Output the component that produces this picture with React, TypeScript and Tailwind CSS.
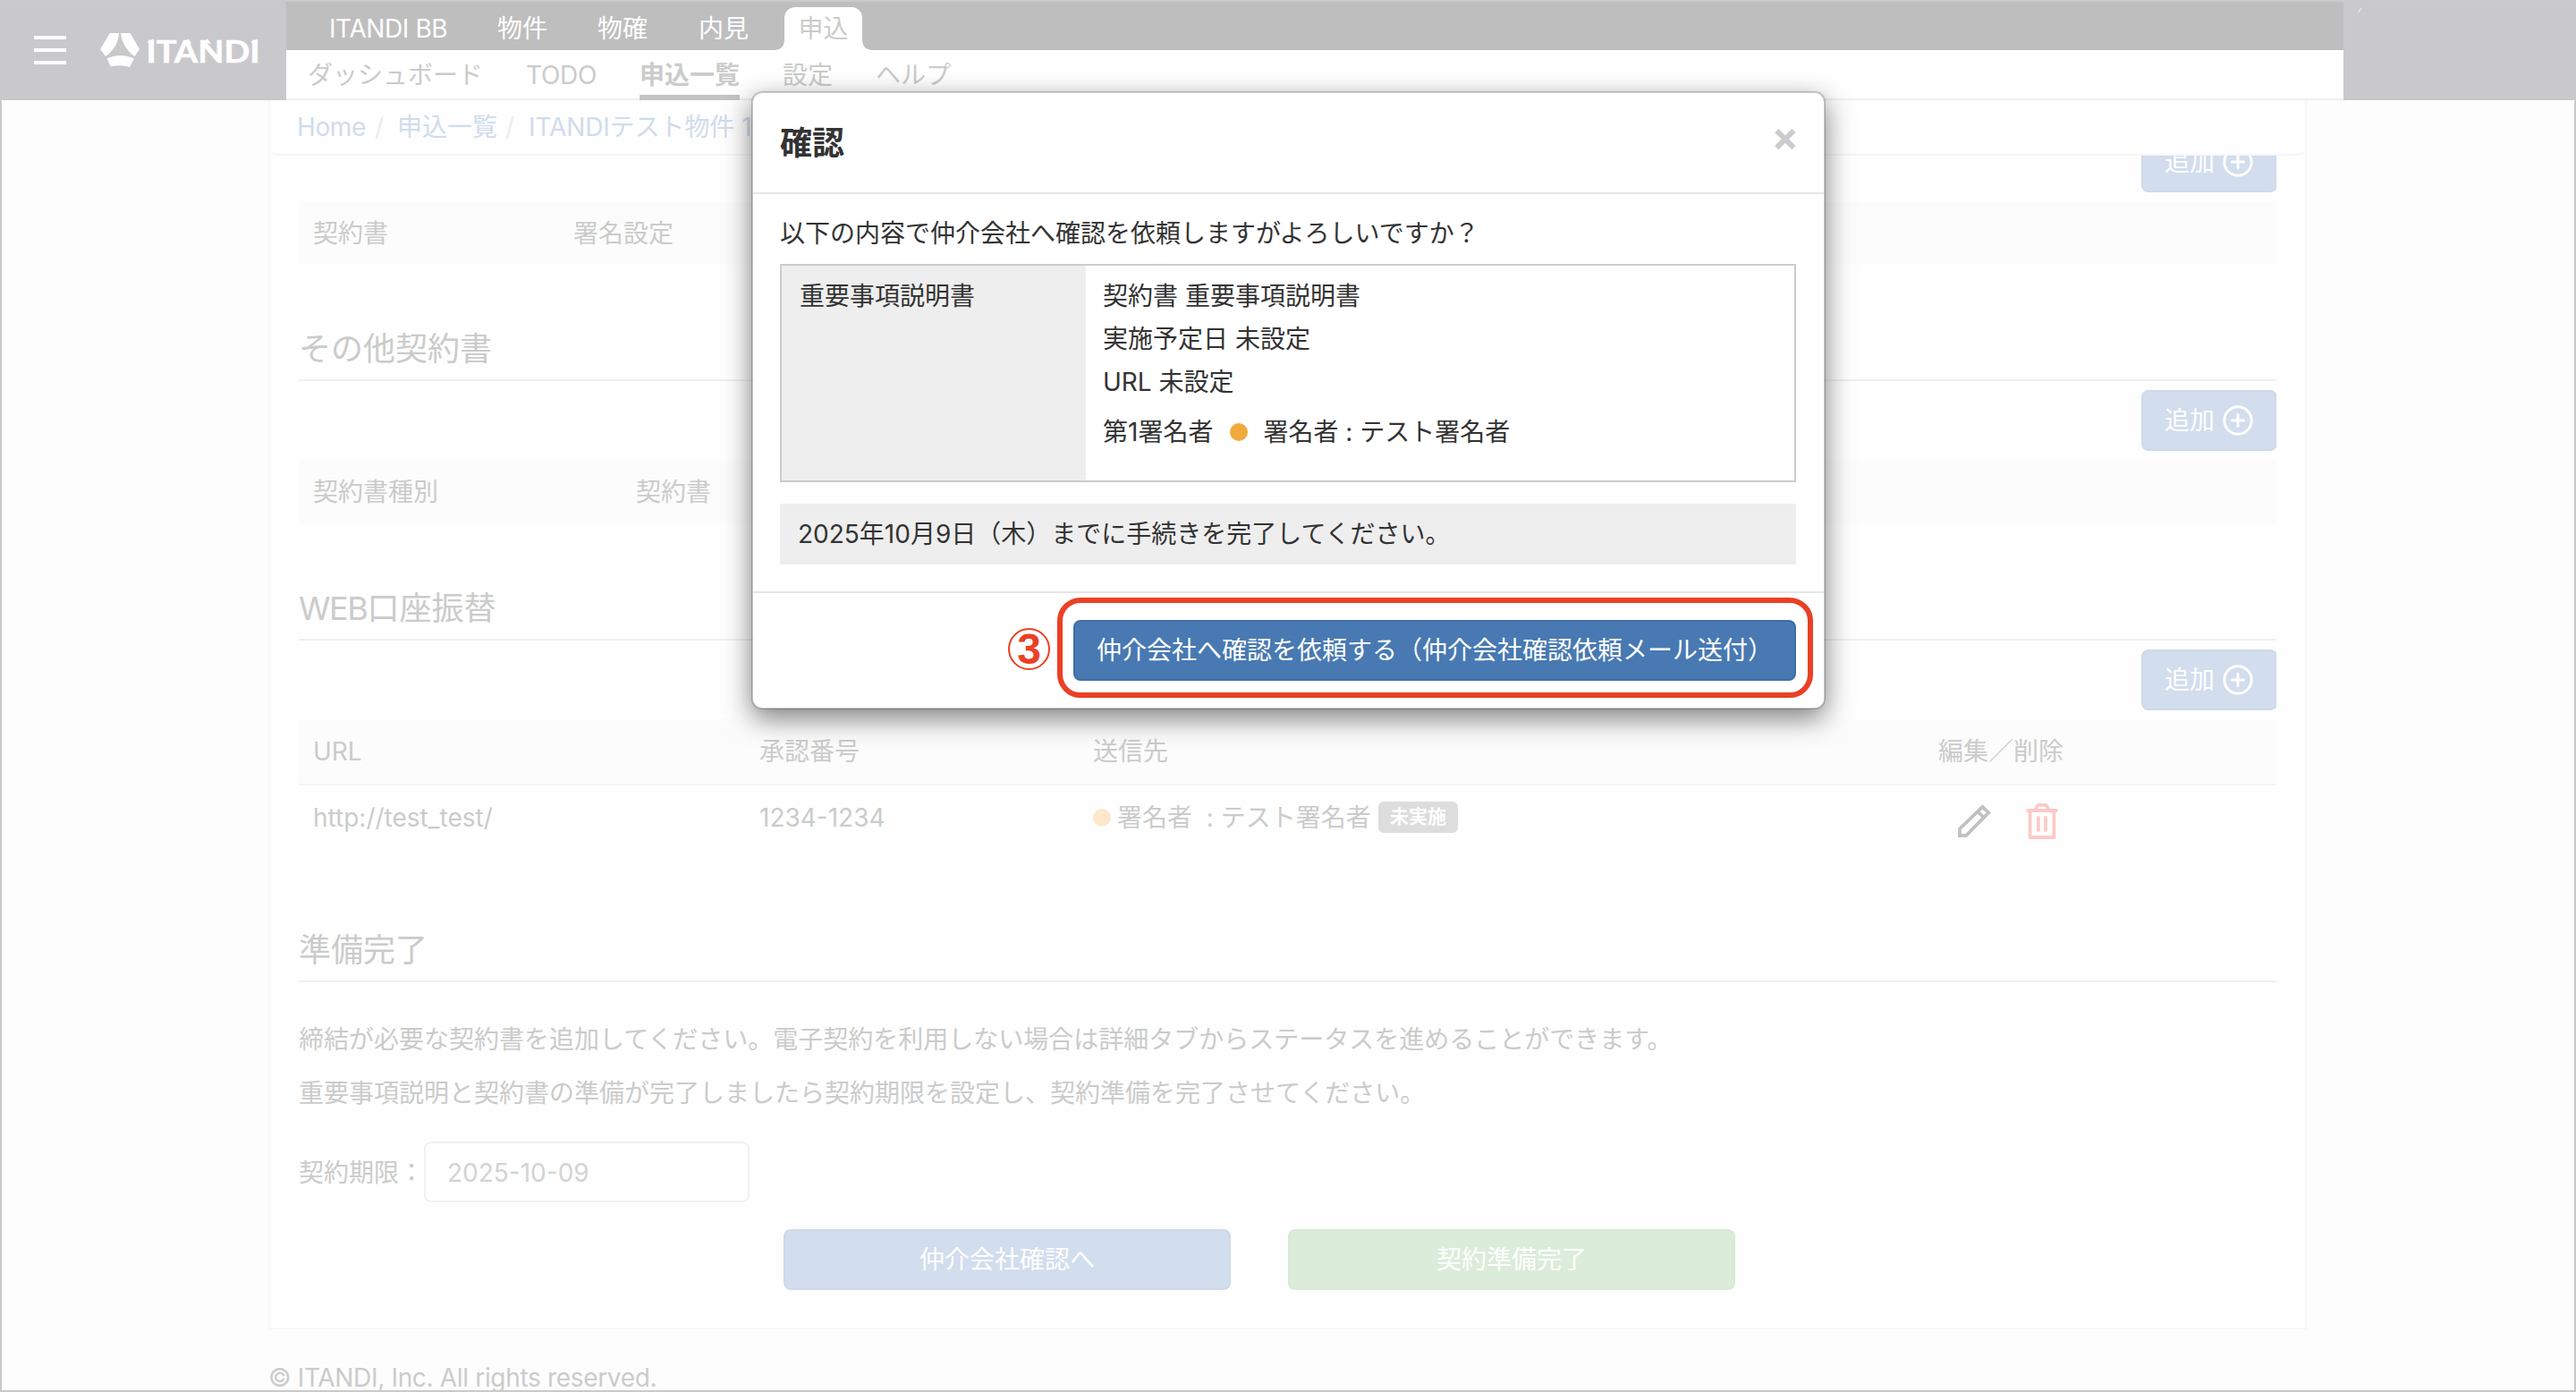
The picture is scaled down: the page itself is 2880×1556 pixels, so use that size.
import React from "react";

const FONT = "font-['Inter','Noto_Sans_CJK_JP',sans-serif]";

function Logo() {
  return (
    <svg width="178" height="42" viewBox="0 0 178 42" className="block" fill="#fff">
      <path d="M11 2H21C20.6 12 15.5 21.5 6 28L0 20Z" />
      <path d="M23 2H33.5L44 20L38.5 28C29 21.5 24 12 23 2Z" />
      <path d="M7.5 30.5C16.5 25.8 28 25.8 38 30.5L32.8 40C26.5 38 19 37.6 11.7 39.3Z" />
      <path d="M53 11.5L60 8.5V14H54ZM92 12.5L99 8.5L102 14ZM113 12L120 8.5L124 14ZM169 11.5L176 8.5V14H170Z" />
      <text
        x="51.5"
        y="34.5"
        fontSize="34"
        fontWeight="700"
        textLength="127"
        lengthAdjust="spacingAndGlyphs"
        stroke="#fff"
        strokeWidth="0.6"
        style={{ fontFamily: "Lato, sans-serif" }}
      >
        ITANDI
      </text>
    </svg>
  );
}

function Header() {
  return (
    <header className="flex h-[110px]">
      <div className="flex w-[318px] bg-[#c9c9cb]">
        <div className="ml-9 mt-[38px] flex h-8 w-9 flex-col justify-between">
          <span className="h-1 bg-white" />
          <span className="h-1 bg-white" />
          <span className="h-1 bg-white" />
        </div>
        <div className="ml-[38px] mt-[33px]">
          <Logo />
        </div>
      </div>
      <div className="w-[2300px]">
        <nav className="flex h-[54px] items-end bg-[#bebebe] pl-12 leading-[48px] text-white">
          <span className="w-[188px] tracking-[-0.4px]">ITANDI BB</span>
          <span className="w-28">物件</span>
          <span className="w-[113px]">物確</span>
          <span className="w-24">内見</span>
          <span className="relative h-12 w-[87px] rounded-t-[12px] bg-white text-center leading-[48px] text-[#cbcbcb]">
            申込
            <svg className="absolute -left-3 bottom-0" width="12" height="12" fill="#fff">
              <path d="M12 0V12H0C8 12 12 8 12 0Z" />
            </svg>
            <svg className="absolute -right-3 bottom-0" width="12" height="12" fill="#fff">
              <path d="M0 0V12H12C4 12 0 8 0 0Z" />
            </svg>
          </span>
        </nav>
        <nav className="flex h-14 border-b-2 border-[#efefef] bg-white pl-6 leading-[57px] text-[#cbcbcb]">
          <span className="w-[244px]">ダッシュボード</span>
          <span className="w-[127px] tracking-[-0.3px]">TODO</span>
          <span className="mr-12 h-14 w-28 border-b-6 border-[#c3c3c5] font-bold">申込一覧</span>
          <span className="w-[104px]">設定</span>
          <span>ヘルプ</span>
        </nav>
      </div>
      <div className="w-[258px] bg-[#c9c9cb] pl-4 pt-1.5">
        <span className="block h-2 w-2 rounded-tl-[8px] border-l-2 border-t-2 border-[#f4f4f4] [clip-path:polygon(0_0,70%_0,0_90%)]" />
      </div>
    </header>
  );
}

function AddButton({ className = "" }: { className?: string }) {
  return (
    <div className={`flex h-[68px] justify-end ${className}`}>
      <button className="flex w-[152px] items-center rounded-[8px] border-2 border-[#cedae8] bg-[#d2dded] pl-6 text-white">
        <span>追加</span>
        <svg className="ml-2" width="36" height="36" viewBox="0 0 36 36" fill="none" stroke="#fff" strokeWidth="3" strokeLinecap="round">
          <circle cx="18" cy="18" r="15.2" />
          <path d="M18 11.5V24.5M11.5 18H24.5" />
        </svg>
      </button>
    </div>
  );
}

function Heading({ children, className = "" }: { children: React.ReactNode; className?: string }) {
  return (
    <h2 className={`h-[70px] border-b-2 border-[#f0f0f0] text-[36px] leading-[69px] ${className}`}>{children}</h2>
  );
}

function Breadcrumb() {
  return (
    <div className="relative -mx-8 flex h-[62px] items-center rounded-[8px] border-b-2 border-[#f7f7f7] bg-[#fefefe] pl-[30px] text-[#d0dcec]">
      <span className="w-[87px] tracking-[-0.4px]">Home</span>
      <span className="w-[25px] text-[#ececec]">/</span>
      <span className="w-[121px]">申込一覧</span>
      <span className="w-[26px] text-[#ececec]">/</span>
      <span className="tracking-[-0.1px]">ITANDIテスト物件 101</span>
    </div>
  );
}

function Pencil() {
  return (
    <svg width="40" height="40" viewBox="0 0 40 40" fill="none" stroke="#c1c1c1" strokeWidth="3.8" strokeLinejoin="miter">
      <path d="M4 36V28.5L29.5 3.8L36.2 10.5L11 36Z" />
      <path d="M24 9L31 16" />
    </svg>
  );
}

function Trash() {
  return (
    <svg width="38" height="42" viewBox="0 0 38 42" fill="none" stroke="#fbcbc7" strokeWidth="3.8" strokeLinecap="round" strokeLinejoin="round">
      <path d="M3 9H35M5.6 9V39H32.4V9M11 8.5L14.5 2.9H23.5L27 8.5" />
      <path d="M15 17V31M23 17V31" />
    </svg>
  );
}

function Page() {
  return (
    <div className="ml-[298px] h-[1444px] text-[#cbcbcb]">
      <main className="h-[1374px] w-[2279px] border-x-2 border-b-2 border-[#f8f8f8] bg-[#fefefe] px-8">
        <Breadcrumb />
        <div className="h-[1310px] overflow-hidden">
          <div className="w-[2212px]">
            <AddButton className="-mt-[27px]" />
            <div className="mt-2.5 flex h-[71px] items-center bg-[#fcfcfc] pl-4">
              <span className="w-[291px]">契約書</span>
              <span>署名設定</span>
            </div>

            <Heading className="mt-[60px]">その他契約書</Heading>
            <AddButton className="mt-2.5" />
            <div className="mt-2.5 flex h-[72px] items-center bg-[#fcfcfc] pl-4">
              <span className="w-[361px]">契約書種別</span>
              <span>契約書</span>
            </div>

            <Heading className="mt-[60px]">
              <span className="tracking-[-1.4px]">WEB</span>口座振替
            </Heading>
            <AddButton className="mt-2.5" />
            <div className="mt-2.5 flex h-[74px] items-center border-b-2 border-[#f4f4f4] bg-[#fcfcfc] pl-4">
              <span className="w-[499px]">URL</span>
              <span className="w-[373px]">承認番号</span>
              <span className="w-[945px]">送信先</span>
              <span>編集／削除</span>
            </div>
            <div className="flex h-[72px] items-center pl-4">
              <span className="w-[499px]">http://test_test/</span>
              <span className="w-[373px]">1234-1234</span>
              <span className="h-5 w-5 rounded-full bg-[#fde8cc]" />
              <span className="ml-[7px] w-[292px] whitespace-pre">署名者  : テスト署名者</span>
              <span className="mb-0.5 h-[35px] w-[89px] rounded-[6px] bg-[#dddddd] text-center text-[21px] font-bold leading-[33px] text-white">
                未実施
              </span>
              <div className="ml-[557px] flex items-center pt-2">
                <Pencil />
                <span className="w-[37px]" />
                <Trash />
              </div>
            </div>

            <Heading className="mt-[78px]">準備完了</Heading>
            <div className="mt-[34px] leading-[60px]">
              <p>締結が必要な契約書を追加してください。電子契約を利用しない場合は詳細タブからステータスを進めることができます。</p>
              <p>重要事項説明と契約書の準備が完了しましたら契約期限を設定し、契約準備を完了させてください。</p>
            </div>
            <div className="mt-6 flex h-[68px] items-center">
              <span className="w-[140px] pt-0.5">契約期限：</span>
              <div className="flex h-[68px] w-[364px] items-center rounded-[8px] border-2 border-[#f1f1f1] pl-6 pt-0.5 text-[#d3d3d3]">
                2025-10-09
              </div>
            </div>
            <div className="mt-[30px] flex gap-16 pl-[542px] text-white">
              <button className="h-[68px] w-[500px] rounded-[8px] border-2 border-[#cedae8] bg-[#d2dded]">仲介会社確認へ</button>
              <button className="h-[68px] w-[500px] rounded-[8px] border-2 border-[#d8e9d5] bg-[#dcecda]">契約準備完了</button>
            </div>
          </div>
        </div>
      </main>
      <footer className="mt-[34px] leading-[40px] tracking-[-0.33px]">© ITANDI, Inc. All rights reserved.</footer>
    </div>
  );
}

function Modal() {
  return (
    <div className="absolute left-[838px] top-[100px] flex h-[691px] w-[1201px] flex-col rounded-[12px] border-2 border-black/20 bg-white bg-clip-padding text-[#333] shadow-[0_10px_30px_rgba(0,0,0,0.5)]">
      <div className="flex h-[113px] justify-between border-b-2 border-[#e5e5e5] pl-[30px] pr-7">
        <h1 className="text-[36px] font-semibold leading-[112px]">確認</h1>
        <button className="h-[98px] text-[45px] font-bold leading-[98px] text-[#ccc]">×</button>
      </div>
      <div className="h-[444px] pl-[30px] pr-[31px] pt-5">
        <p className="leading-[48px]">以下の内容で仲介会社へ確認を依頼しますがよろしいですか？</p>
        <div className="mt-2.5 flex h-[244px] border-2 border-[#ccc] leading-[48px]">
          <div className="w-[340px] bg-[#eee] pl-5 pt-2.5">重要事項説明書</div>
          <div className="pl-[19px] pt-2.5">
            <p>契約書 重要事項説明書</p>
            <p>実施予定日 未設定</p>
            <p>URL 未設定</p>
            <p className="mt-2 flex items-center">
              第1署名者
              <span className="ml-[19px] mr-[17px] h-5 w-5 rounded-full bg-[#f0a93b]" />
              署名者 : テスト署名者
            </p>
          </div>
        </div>
        <div className="mt-6 h-[68px] bg-[#eee] pl-5 leading-[68px]">2025年10月9日（木）までに手続きを完了してください。</div>
      </div>
      <div className="flex flex-1 justify-end border-t-2 border-[#e5e5e5] pr-[31px] pt-[30px]">
        <div className="relative">
          <button className="h-[68px] w-[808px] rounded-[8px] border-2 border-[#3f6ea6] bg-[#4879b2] text-white">
            仲介会社へ確認を依頼する（仲介会社確認依頼メール送付）
          </button>
          <div className="absolute -left-[18px] -top-[25px] h-[112px] w-[845px] rounded-[26px] border-6 border-[#ea4025]" />
          <div className="absolute -left-[73px] top-[9px] flex h-[47px] w-[47px] items-center justify-center rounded-full border-2 border-[#ea4025] font-['Liberation_Sans',sans-serif] text-[48px] font-bold leading-none text-[#ea4025]">
            3
          </div>
        </div>
      </div>
    </div>
  );
}

export default function App() {
  return (
    <div className={`relative h-[1556px] w-[2880px] overflow-hidden border-2 border-[#cacacc] bg-[#fdfdfd] text-[28px] leading-[40px] ${FONT}`}>
      <Header />
      <Page />
      <Modal />
    </div>
  );
}
